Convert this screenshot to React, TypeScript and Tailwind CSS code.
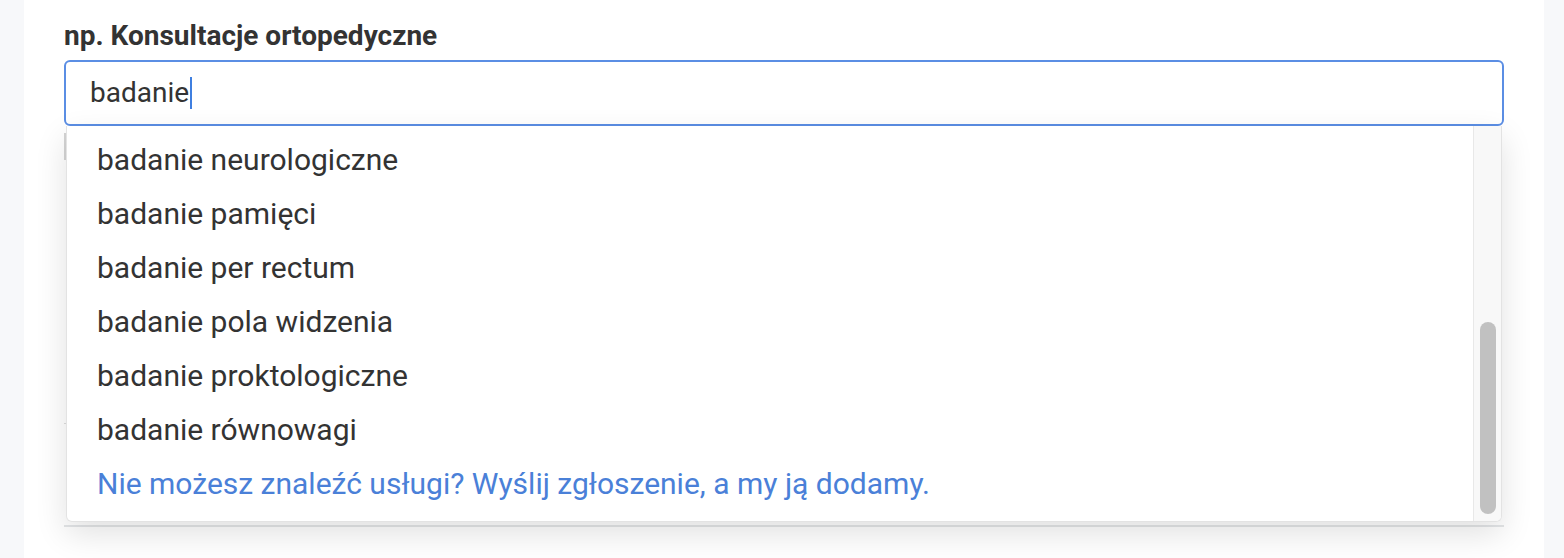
export default function App() {
  const items = [
    "badanie neurologiczne",
    "badanie pamięci",
    "badanie per rectum",
    "badanie pola widzenia",
    "badanie proktologiczne",
    "badanie równowagi",
  ]

  return (
    <div className="h-[558px] bg-[#f7f8fa] pl-[24px] pr-[20px] font-['Roboto',sans-serif] overflow-hidden">
      <div className="h-full bg-white px-[40px] pt-[20px]">
        <label className="block text-[28px] leading-[32px] font-bold text-[#333]">
          np. Konsultacje ortopedyczne
        </label>

        <div className="relative mt-[8px]">
          <div className="flex h-[66px] items-center rounded-[6px] border-2 border-[#5b8ee4] px-[24px]">
            <span className="text-[28px] leading-none text-[#333]">badanie</span>
            <span className="ml-[1px] h-[32px] w-[2px] bg-[#3f7fe0]" />
          </div>

          {/* content underneath the open dropdown */}
          <div className="mt-[7px] h-[27px] w-[2px] bg-[#d4d4d4]" />
          <div className="mt-[263px] h-px w-[4px] bg-[#dedede]" />
          <div className="mt-[101px] h-[2px] w-full bg-[#e4e6e8]" />

          <div className="absolute left-[2px] right-[2px] top-[66px] flex h-[396px] overflow-hidden rounded-b-[6px] border border-t-0 border-[#e3e3e3] bg-white shadow-[0_12px_32px_rgba(0,0,0,0.12)]">
            <ul className="flex-1 pt-[6px] pl-[30px]">
              {items.map((item) => (
                <li key={item} className="flex h-[54px] items-center text-[30px] text-[#333]">
                  {item}
                </li>
              ))}
              <li className="flex h-[54px] items-center text-[30px] text-[#4a80d8]">
                Nie możesz znaleźć usługi? Wyślij zgłoszenie, a my ją dodamy.
              </li>
            </ul>
            <div className="flex w-[28px] flex-col border-l border-[#e8e8e8] bg-[#f8f8f8] pl-[6px] pr-[5px] pt-[196px] pb-[7px]">
              <div className="flex-1 rounded-full bg-[#c1c1c1]" />
            </div>
          </div>
        </div>
      </div>
    </div>
  )
}
